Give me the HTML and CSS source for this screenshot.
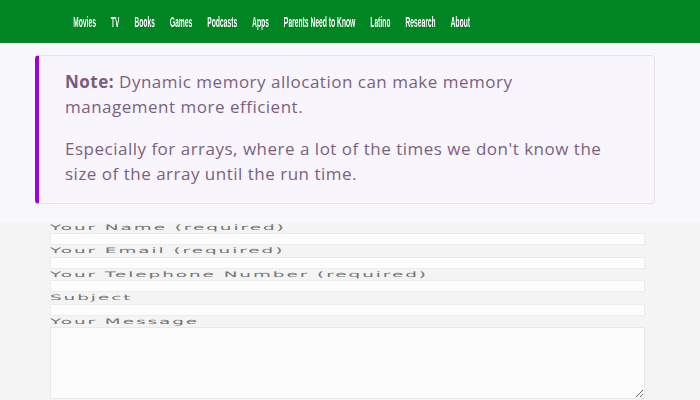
FILE: index.html
```html
<!DOCTYPE html>
<html lang="en">
<head>
<meta charset="utf-8">
<title>Note</title>
<link rel="stylesheet" href="styles.css">
</head>
<body>
<header class="topbar">
  <nav class="nav">
    <a href="#">Movies</a>
    <a href="#">TV</a>
    <a href="#">Books</a>
    <a href="#">Games</a>
    <a href="#">Podcasts</a>
    <a href="#">Apps</a>
    <a href="#">Parents Need to Know</a>
    <a href="#">Latino</a>
    <a href="#">Research</a>
    <a href="#">About</a>
  </nav>
</header>
<section class="intro">
  <div class="note">
    <p><strong>Note:</strong> Dynamic memory allocation can make memory<br>management more efficient.</p>
    <p>Especially for arrays, where a lot of the times we don't know the size of the array until the run time.</p>
  </div>
</section>
<form class="contact">
  <div class="field"><label><span>Your Name (required)</span></label><input type="text"></div>
  <div class="field"><label><span>Your Email (required)</span></label><input type="text"></div>
  <div class="field"><label><span>Your Telephone Number (required)</span></label><input type="text"></div>
  <div class="field"><label><span>Subject</span></label><input type="text"></div>
  <div class="field"><label><span>Your Message</span></label><textarea></textarea></div>
</form>
</body>
</html>
```
FILE: styles.css
```css
html, body {
  margin: 0;
  padding: 0;
}
body {
  background: #f4f4f4;
  font-family: "Open Sans", "Liberation Sans", sans-serif;
  overflow: hidden;
}
.topbar {
  background: #008522;
  height: 43px;
  border-bottom: 1px solid #0a8f2c;
  box-sizing: border-box;
  overflow: hidden;
}
.nav {
  display: flex;
  gap: 31px;
  padding-left: 152px;
  height: 43px;
  align-items: center;
  transform: scaleX(0.481);
  transform-origin: 0 0;
  will-change: transform;
  width: 1400px;
}
.nav a {
  color: #ffffff;
  text-decoration: none;
  font-family: "Liberation Sans", sans-serif;
  font-size: 14px;
  font-weight: bold;
  white-space: nowrap;
}
.intro {
  position: relative;
  z-index: 1;
  background: #f8f7fb;
  padding: 12px 0 19px 0;
}
.note {
  margin-left: 35px;
  width: 620px;
  box-sizing: border-box;
  background: #f9f5fd;
  border: 1px solid #e6e1ea;
  border-left: 4px solid #9f00e0;
  border-radius: 4px;
  padding: 13px 20px 17px 26px;
  color: #7b6180;
  font-size: 17px;
  line-height: 25px;
  letter-spacing: 0.5px;
}
.note p {
  margin: 0;
}
.note p + p {
  margin-top: 17px;
}
.note strong {
  font-weight: 700;
  color: #7a5a80;
}
.contact {
  margin-top: -1.5px;
  padding-left: 50px;
  width: 595px;
}
.field label {
  display: block;
  height: 11.5px;
  line-height: 11.5px;
  font-family: "DejaVu Sans", sans-serif;
  font-size: 7.5px;
  color: #747474;
  white-space: nowrap;
}
.field label span {
  display: inline-block;
  transform: scaleX(2.45);
  transform-origin: left center;
  letter-spacing: 0.8px;
}
.field input {
  display: block;
  width: 595px;
  height: 12px;
  box-sizing: border-box;
  border: 1px solid #ececec;
  background: #fdfdfd;
  margin: 0;
  padding: 0;
}
.field textarea {
  display: block;
  width: 595px;
  height: 72px;
  box-sizing: border-box;
  border: 1px solid #e9e9e9;
  background: #fcfcfc;
  margin: 0;
  padding: 0;
  resize: vertical;
}
```
